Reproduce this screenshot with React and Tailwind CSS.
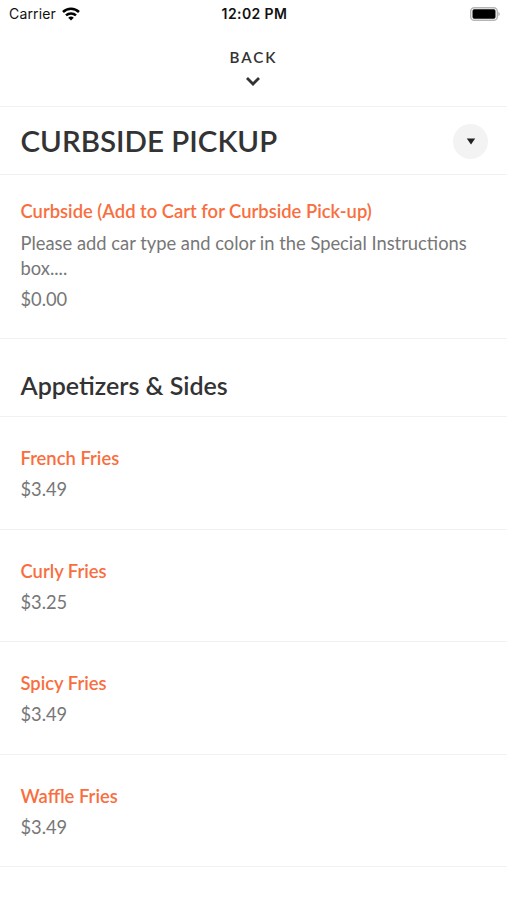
const fries = [
  { name: "French Fries", price: "$3.49" },
  { name: "Curly Fries", price: "$3.25" },
  { name: "Spicy Fries", price: "$3.49" },
  { name: "Waffle Fries", price: "$3.49" },
]

function StatusBar() {
  return (
    <div className="grid h-[27px] grid-cols-3 items-center pl-[9px] pr-[7px] font-['Inter',sans-serif] text-[14px] text-[#111111]">
      <div className="flex items-center gap-[6px]">
        <span className="tracking-[0.15px]">Carrier</span>
        <svg width="18" height="14" viewBox="0 0 18 14" fill="none" stroke="#000" strokeWidth="2.5">
          <path d="M1 5a11.5 11.5 0 0 1 16 0" />
          <path d="M4 8.4a7.2 7.2 0 0 1 10 0" />
          <path d="M9 13.6 6.2 10.8a4 4 0 0 1 5.6 0z" fill="#000" stroke="none" />
        </svg>
      </div>
      <span className="text-center font-semibold tracking-[0.4px] whitespace-nowrap">12:02 PM</span>
      <svg className="justify-self-end" width="30" height="14" viewBox="0 0 30 14">
        <rect x="0.7" y="0.7" width="26.6" height="12.6" rx="3.6" fill="#fff" stroke="#b5b5b5" strokeWidth="1.4" />
        <rect x="2.5" y="2.3" width="23" height="9.4" rx="1.6" fill="#000" />
        <path d="M28.3 4.8c2 .8 2 3.6 0 4.4z" fill="#b5b5b5" />
      </svg>
    </div>
  )
}

function Item({ name, price }) {
  return (
    <div className="h-[112.4px] border-b border-[#f1f1f1] px-[20.5px] pt-[28px]">
      <h3 className="text-[18.4px] leading-[26px] font-semibold text-[#f96e3e]">{name}</h3>
      <p className="mt-[6px] text-[18.3px] leading-[25px]">{price}</p>
    </div>
  )
}

export default function App() {
  return (
    <div className="h-[900px] w-[507px] overflow-hidden bg-white font-['Lato',sans-serif] text-[#777777]">
      <StatusBar />

      {/* Back */}
      <div className="flex h-[80px] flex-col items-center border-b border-[#f1f1f1] pt-[20px] text-[#333333]">
        <span className="text-[15.2px] leading-[20px] font-semibold tracking-[2px]">BACK</span>
        <svg className="mt-[9px] mr-[1px]" width="16" height="10" viewBox="0 0 16 10" fill="none" stroke="#333" strokeWidth="2.8">
          <path d="M2 2l6 6 6-6" />
        </svg>
      </div>

      {/* Category picker */}
      <div className="flex h-[68px] items-center justify-between border-b border-[#f1f1f1] pl-[20.5px] pr-[19px]">
        <h1 className="pt-[2px] text-[29.5px] font-semibold text-[#333333]">CURBSIDE PICKUP</h1>
        <button className="mt-[1px] flex h-[35px] w-[35px] items-center justify-center rounded-full bg-[#f3f3f3]">
          <svg width="10" height="7" viewBox="0 0 10 7" fill="#222">
            <path d="M0.8 0.5h8.4L5 6.5z" />
          </svg>
        </button>
      </div>

      <div className="h-[163.6px] border-b border-[#f1f1f1] px-[20.5px] pt-[24px]">
        <h3 className="text-[18.4px] leading-[25px] font-semibold text-[#f96e3e]">Curbside (Add to Cart for Curbside Pick-up)</h3>
        <p className="mt-[7px] text-[18.35px] leading-[24.5px] whitespace-nowrap">
          Please add car type and color in the Special Instructions<br />box....
        </p>
        <p className="mt-[7px] text-[18.3px] leading-[25px]">$0.00</p>
      </div>

      <h2 className="h-[78.8px] border-b border-[#f1f1f1] px-[20.5px] pt-[31px] text-[25px] leading-[31px] font-semibold text-[#333333]">Appetizers &amp; Sides</h2>
      {fries.map((item) => (
        <Item key={item.name} name={item.name} price={item.price} />
      ))}
    </div>
  )
}
